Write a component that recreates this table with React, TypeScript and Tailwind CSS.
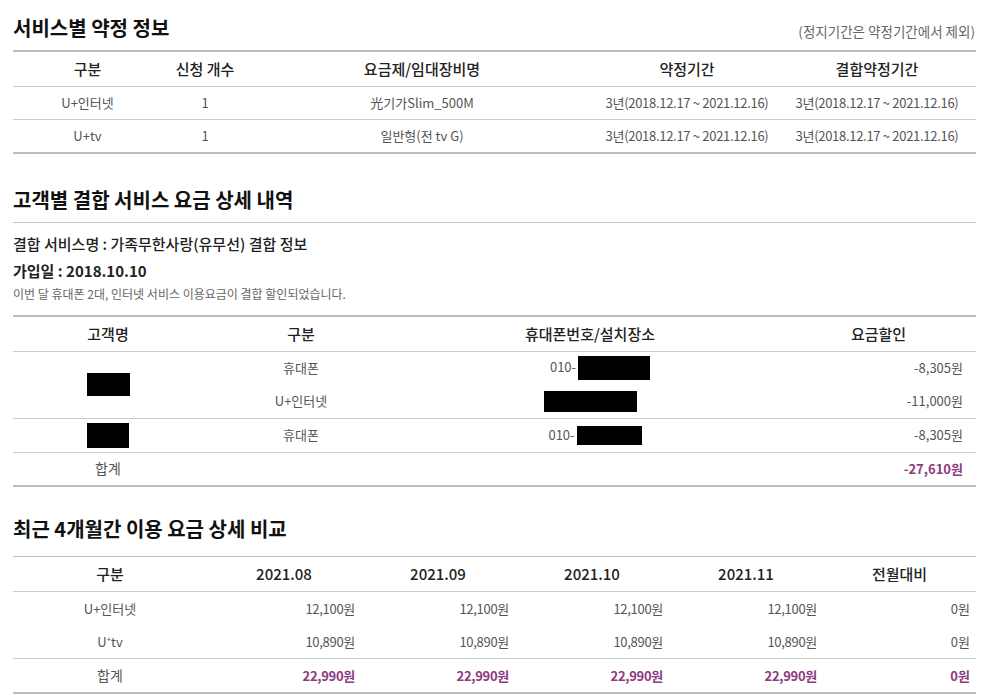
import React from 'react';

const FONT = { fontFamily: '"Noto Sans CJK KR", "Noto Sans", sans-serif' };

// shared cell styles (in collapsed tables the cell height includes its border)
const th = 'h-[35px] p-0 text-center text-[15px] font-medium text-[#222] border-b border-b-[#cccccc]';
const td = 'p-0 text-[13px]';
const gray = 'text-[#555]';
const purple = 'font-bold text-[#8e3a80]';
const line = 'h-[34px] border-b border-b-[#cccccc]';
const bottom = 'h-[34px] border-b-2 border-b-[#bdbdbd]';
const plain = 'h-[33px]';

const Title: React.FC<{ children: React.ReactNode; className?: string }> = ({ children, className }) => (
  <h2 className={`text-[20px] leading-[28px] font-bold text-[#111] ${className ?? ''}`}>{children}</h2>
);

const Box: React.FC<{ w: string }> = ({ w }) => <span className={`inline-block bg-black align-middle ${w}`} />;

const contractRows = [
  { kind: 'U+인터넷', count: '1', plan: '光기가Slim_500M' },
  { kind: 'U+tv', count: '1', plan: '일반형(전 tv G)' },
];

const months = ['2021.08', '2021.09', '2021.10', '2021.11'];

const usageRows = [
  { kind: 'U+인터넷', values: ['12,100원', '12,100원', '12,100원', '12,100원'], diff: '0원' },
  { kind: 'U⁺tv', values: ['10,890원', '10,890원', '10,890원', '10,890원'], diff: '0원' },
];

export default function App() {
  return (
    <div className="min-h-screen bg-white pl-[13px] pr-[10px] pt-[14px]" style={FONT}>
      {/* 서비스별 약정 정보 */}
      <div className="flex items-end justify-between">
        <Title>서비스별 약정 정보</Title>
        <span className="text-[13.5px] leading-[22px] text-[#666] pr-[1px]">(정지기간은 약정기간에서 제외)</span>
      </div>
      <table className="mt-[8px] w-full table-fixed border-collapse">
        <colgroup>
          <col className="w-[149px]" />
          <col className="w-[86px]" />
          <col className="w-[348px]" />
          <col className="w-[182px]" />
          <col />
        </colgroup>
        <thead>
          <tr className="border-t-2 border-t-[#bdbdbd]">
            <th className={th}>구분</th>
            <th className={th}>신청 개수</th>
            <th className={th}>요금제/임대장비명</th>
            <th className={th}>약정기간</th>
            <th className={th}>결합약정기간</th>
          </tr>
        </thead>
        <tbody>
          {contractRows.map((r, i) => {
            const b = i === contractRows.length - 1 ? bottom : 'h-[33px] border-b border-b-[#cccccc]';
            return (
              <tr key={r.kind}>
                <td className={`${td} ${gray} ${b} text-center`}>{r.kind}</td>
                <td className={`${td} ${gray} ${b} text-center`}>{r.count}</td>
                <td className={`${td} ${gray} ${b} text-center`}>{r.plan}</td>
                <td className={`${td} ${gray} ${b} text-center tracking-[-0.3px]`}>3년(2018.12.17 ~ 2021.12.16)</td>
                <td className={`${td} ${gray} ${b} text-center tracking-[-0.3px]`}>3년(2018.12.17 ~ 2021.12.16)</td>
              </tr>
            );
          })}
        </tbody>
      </table>

      {/* 고객별 결합 서비스 요금 상세 내역 */}
      <div className="mt-[32px] border-b border-b-[#c4c4c4] pb-[8px]">
        <Title>고객별 결합 서비스 요금 상세 내역</Title>
      </div>
      <p className="mt-[10px] text-[15px] leading-[22px] font-medium text-[#222]">
        결합 서비스명 : 가족무한사랑(유무선) 결합 정보
      </p>
      <p className="mt-[5px] text-[15px] leading-[22px] font-bold text-[#222]">가입일 : 2018.10.10</p>
      <p className="mt-[3px] text-[12px] leading-[18px] text-[#666]">
        이번 달 휴대폰 2대, 인터넷 서비스 이용요금이 결합 할인되었습니다.
      </p>
      <table className="mt-[12px] w-full table-fixed border-collapse">
        <colgroup>
          <col className="w-[190px]" />
          <col className="w-[196px]" />
          <col className="w-[382px]" />
          <col />
        </colgroup>
        <thead>
          <tr className="border-t-2 border-t-[#bdbdbd]">
            <th className={th}>고객명</th>
            <th className={th}>구분</th>
            <th className={th}>휴대폰번호/설치장소</th>
            <th className={th}>요금할인</th>
          </tr>
        </thead>
        <tbody>
          <tr>
            <td rowSpan={2} className={`${td} border-b border-b-[#cccccc] text-center`}>
              <Box w="w-[43px] h-[23px]" />
            </td>
            <td className={`${td} ${gray} ${plain} text-center`}>휴대폰</td>
            <td className={`${td} ${gray} ${plain} text-center pl-[20px]`}>
              010-<Box w="ml-[2px] w-[72px] h-[24px]" />
            </td>
            <td className={`${td} ${gray} ${plain} text-right pr-[13px]`}>-8,305원</td>
          </tr>
          <tr>
            <td className={`${td} ${gray} ${line} text-center`}>U+인터넷</td>
            <td className={`${td} ${gray} ${line} text-center`}>
              <Box w="w-[93px] h-[21px]" />
            </td>
            <td className={`${td} ${gray} ${line} text-right pr-[13px]`}>-11,000원</td>
          </tr>
          <tr>
            <td className={`${td} ${line} text-center`}>
              <Box w="w-[42px] h-[25px]" />
            </td>
            <td className={`${td} ${gray} ${line} text-center`}>휴대폰</td>
            <td className={`${td} ${gray} ${line} text-center pl-[10px]`}>
              010-<Box w="ml-[2px] w-[65px] h-[19px]" />
            </td>
            <td className={`${td} ${gray} ${line} text-right pr-[13px]`}>-8,305원</td>
          </tr>
          <tr>
            <td className={`${td} ${gray} ${bottom} text-center text-[14px]`}>합계</td>
            <td className={`${td} ${bottom}`} />
            <td className={`${td} ${bottom}`} />
            <td className={`${td} ${purple} ${bottom} text-right pr-[13px]`}>-27,610원</td>
          </tr>
        </tbody>
      </table>

      {/* 최근 4개월간 이용 요금 상세 비교 */}
      <Title className="mt-[28px]">최근 4개월간 이용 요금 상세 비교</Title>
      <table className="mt-[13px] w-full table-fixed border-collapse">
        <colgroup>
          <col className="w-[194px]" />
          <col className="w-[154px]" />
          <col className="w-[154px]" />
          <col className="w-[154px]" />
          <col className="w-[154px]" />
          <col />
        </colgroup>
        <thead>
          <tr className="border-t border-t-[#bdbdbd]">
            <th className={th}>구분</th>
            {months.map((m) => (
              <th key={m} className={`${th} font-bold`}>
                {m}
              </th>
            ))}
            <th className={th}>전월대비</th>
          </tr>
        </thead>
        <tbody>
          {usageRows.map((r, i) => {
            const b = i === usageRows.length - 1 ? line : plain;
            return (
              <tr key={r.kind}>
                <td className={`${td} ${gray} ${b} text-center`}>{r.kind}</td>
                {r.values.map((v, j) => (
                  <td key={j} className={`${td} ${gray} ${b} text-right pr-[6px] tracking-[-0.3px]`}>
                    {v}
                  </td>
                ))}
                <td className={`${td} ${gray} ${b} text-right pr-[6px]`}>{r.diff}</td>
              </tr>
            );
          })}
          <tr>
            <td className={`${td} ${gray} ${bottom} text-center text-[14px]`}>합계</td>
            {months.map((m) => (
              <td key={m} className={`${td} ${purple} ${bottom} text-right pr-[6px] tracking-[-0.3px]`}>
                22,990원
              </td>
            ))}
            <td className={`${td} ${purple} ${bottom} text-right pr-[6px]`}>0원</td>
          </tr>
        </tbody>
      </table>
    </div>
  );
}
